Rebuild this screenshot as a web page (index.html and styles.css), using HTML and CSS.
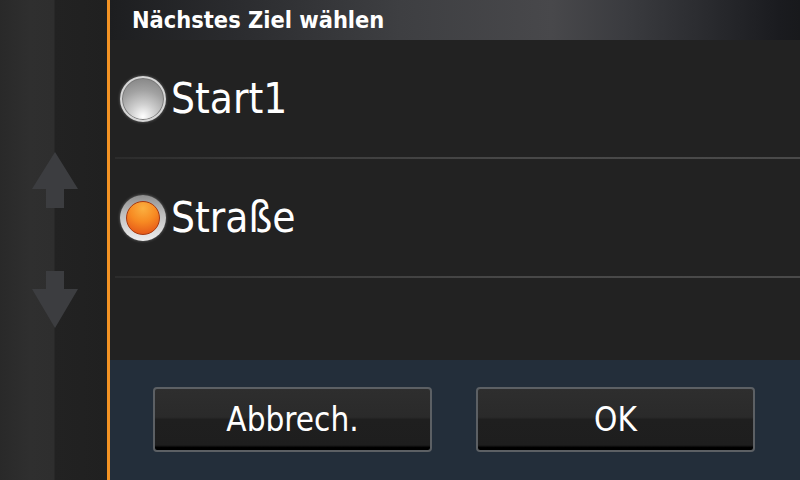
FILE: index.html
```html
<!DOCTYPE html>
<html lang="de">
<head>
<meta charset="utf-8">
<title>Nächstes Ziel wählen</title>
<link rel="stylesheet" href="styles.css">
</head>
<body>
<div class="screen">
  <aside class="sidebar">
    <svg class="arrow" width="47" height="57" viewBox="0 0 47 57" aria-hidden="true">
      <polygon points="23,0 46,37 32,37 32,56 14,56 14,37 0,37" fill="#3c3d40"/>
    </svg>
    <svg class="arrow" width="47" height="57" viewBox="0 0 47 57" aria-hidden="true">
      <polygon points="14,0 32,0 32,18 46,18 23,57 0,18 14,18" fill="#3c3d40"/>
    </svg>
  </aside>
  <main class="dialog">
    <header class="title">Nächstes Ziel wählen</header>
    <div class="list">
      <div class="option">
        <span class="radio"></span>
        <span class="label">Start1</span>
      </div>
      <div class="sep"></div>
      <div class="option">
        <span class="radio checked"></span>
        <span class="label">Straße</span>
      </div>
      <div class="sep"></div>
    </div>
    <footer class="actions">
      <button class="btn">Abbrech.</button>
      <button class="btn">OK</button>
    </footer>
  </main>
</div>
</body>
</html>
```
FILE: styles.css
```css
html, body {
  margin: 0;
  padding: 0;
  width: 800px;
  height: 480px;
  overflow: hidden;
  background: #222222;
}

.screen {
  display: flex;
  width: 800px;
  height: 480px;
  font-family: "DejaVu Sans Condensed", "DejaVu Sans", sans-serif;
  font-stretch: semi-condensed;
  color: #ffffff;
}

.sidebar {
  flex: 0 0 110px;
  box-sizing: border-box;
  border-right: 3px solid #f39324;
  background: linear-gradient(to right, #292929 0, #2f2f2f 30px, #2e2e2e 54px, #222222 55px, #202020 107px);
  display: flex;
  flex-direction: column;
  align-items: flex-start;
  padding-top: 152px;
  padding-left: 32px;
  gap: 62px;
}

.arrow {
  display: block;
}

.dialog {
  flex: 1;
  display: flex;
  flex-direction: column;
  background: #222222;
}

.title {
  height: 40px;
  line-height: 40px;
  padding-left: 22px;
  font-size: 23.4px;
  font-weight: bold;
  background: linear-gradient(to right, #1d1e20 0%, #2c2d30 20%, #3e3f42 42%, #48484b 64%, #3a3b3f 75%, #2c2d31 85%, #1a1b1f 97%, #18191c 100%);
}

.list {
  flex: 1;
  display: flex;
  flex-direction: column;
}

.option {
  height: 117px;
  display: flex;
  align-items: center;
  gap: 5px;
  padding-left: 10px;
}

.radio {
  flex: 0 0 46px;
  width: 46px;
  height: 46px;
  box-sizing: border-box;
  border-radius: 50%;
  border: 2px solid #d6d6d6;
  background: radial-gradient(circle at 50% 92%, #ffffff 0, #d0d0d0 28%, #a2a2a2 60%, #858585 90%);
  box-shadow: 0 0 3px rgba(255, 255, 255, 0.35), inset 0 0 0 1px #7a7a7a;
}

.radio.checked {
  border: none;
  display: flex;
  align-items: center;
  justify-content: center;
  background: linear-gradient(to bottom, #8e8e8e 0%, #bdbdbd 40%, #eeeeee 100%);
  box-shadow: 0 0 3px rgba(255, 255, 255, 0.35);
}

.radio.checked::before {
  content: "";
  width: 34px;
  height: 34px;
  box-sizing: border-box;
  border-radius: 50%;
  border: 1px solid #a8380e;
  background: radial-gradient(circle at 50% 20%, #fbb040 0, #f78a22 45%, #e8601a 80%, #df4f14 100%);
}

.label {
  font-size: 42px;
  line-height: 1;
}

.sep {
  height: 2px;
  margin-left: 5px;
  background: linear-gradient(to right, #2c2c2c 0, #3e3e3e 30%, #484848 60%, #4a4a4a 100%);
}

.actions {
  height: 120px;
  box-sizing: border-box;
  background: #232e3a;
  display: flex;
  align-items: flex-start;
  gap: 44px;
  padding: 27px 0 0 43px;
}

.btn {
  flex: 0 0 279px;
  height: 65px;
  box-sizing: border-box;
  border: 2px solid #5c6064;
  border-radius: 4px;
  background: linear-gradient(to bottom, #2e2e2e 0, #2a2a2a 46%, #1f1f1f 50%, #1e1e1e 92%, #000000 96%, #000000 100%);
  color: #ffffff;
  font-family: "DejaVu Sans Condensed", "DejaVu Sans", sans-serif;
  font-stretch: semi-condensed;
  font-size: 33px;
  padding: 0;
}
```
